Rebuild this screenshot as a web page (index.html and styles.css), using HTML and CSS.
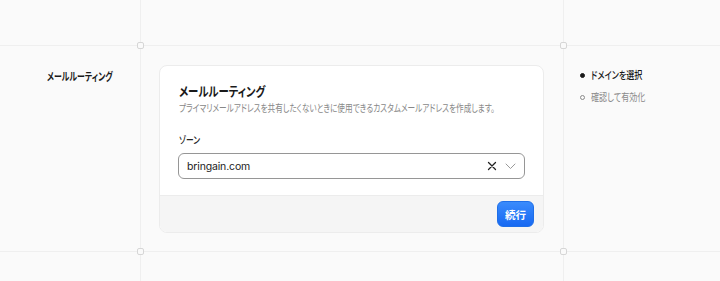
FILE: index.html
```html
<!DOCTYPE html>
<html lang="ja">
<head>
<meta charset="utf-8">
<link rel="stylesheet" href="styles.css">
</head>
<body>
<div class="page">
  <div class="grid">
    <div class="cell"></div>
    <div class="cell"></div>
    <div class="cell"></div>

    <div class="cell side-label">
      <span class="label-text narrow">メールルーティング</span>
    </div>
    <div class="cell main">
      <div class="card">
        <div class="card-body">
          <h2 class="card-title narrow">メールルーティング</h2>
          <p class="card-desc narrow">プライマリメールアドレスを共有したくないときに使用できるカスタムメールアドレスを作成します。</p>
          <div class="field">
            <div class="field-label narrow">ゾーン</div>
            <div class="select">
              <span class="select-value">bringain.com</span>
              <span class="select-icons">
                <svg class="icon-x" width="10" height="10" viewBox="0 0 10 10"><path d="M1.5 1.5 L8.5 8.5 M8.5 1.5 L1.5 8.5" stroke="#222" stroke-width="1.3" fill="none" stroke-linecap="round"/></svg>
                <svg class="icon-chev" width="11" height="7" viewBox="0 0 11 7"><path d="M1 1 L5.5 5.5 L10 1" stroke="#999" stroke-width="1" fill="none" stroke-linecap="round" stroke-linejoin="round"/></svg>
              </span>
            </div>
          </div>
        </div>
        <div class="card-footer">
          <button class="btn-primary">続行</button>
        </div>
      </div>
    </div>
    <div class="cell steps">
      <ul class="step-list">
        <li class="step active"><span class="dot"></span><span class="narrow">ドメインを選択</span></li>
        <li class="step"><span class="dot"></span><span class="narrow">確認して有効化</span></li>
      </ul>
    </div>

    <div class="cell"></div>
    <div class="cell"></div>
    <div class="cell"></div>
  </div>
  <span class="marker m1"></span>
  <span class="marker m2"></span>
  <span class="marker m3"></span>
  <span class="marker m4"></span>
</div>
</body>
</html>
```
FILE: styles.css
```css
* { box-sizing: border-box; }
html, body { margin: 0; padding: 0; }
body {
  background: #fafafa;
  font-family: "Noto Sans CJK JP", "Noto Sans", sans-serif;
  font-feature-settings: "palt";
  color: #1a1a1a;
  width: 720px;
  height: 281px;
  overflow: hidden;
}
.page { position: relative; width: 720px; height: 281px; }
.grid {
  display: grid;
  grid-template-columns: 140px 422px 1fr;
  grid-template-rows: 45px 205px 1fr;
  gap: 1px;
  background: #efefef;
  height: 281px;
}
.cell { background: #fafafa; }

/* condensed rendering of the Japanese UI font */
.narrow {
  display: inline-block;
  white-space: nowrap;
  transform: scaleX(0.77);
  transform-origin: left center;
}
h2.narrow, p.narrow, div.narrow { display: block; }

.side-label { padding: 16px 0 0 47px; }
.label-text { font-size: 11px; font-weight: 700; transform: scaleX(0.72); }

.main { padding: 19px 19px 17px 18px; }
.card {
  background: #fff;
  border: 1px solid #ececec;
  border-radius: 8px;
  height: 168px;
  display: flex;
  flex-direction: column;
  overflow: hidden;
}
.card-body { padding: 16px 18px 0 19px; flex: 1; }
.card-title { margin: 0; font-size: 13px; font-weight: 700; line-height: 18px; transform: scaleX(0.8); }
.card-desc { margin: 0; font-size: 10.2px; color: #888; line-height: 15px; transform: scaleX(0.75); }
.field { margin-top: 18px; }
.field-label { font-size: 10px; font-weight: 500; line-height: 14px; margin-bottom: 6px; color: #222; }
.select {
  height: 26px;
  border: 1px solid #969696;
  border-radius: 6px;
  display: flex;
  align-items: center;
  justify-content: space-between;
  padding: 0 8px;
  margin-left: -1px;
}
.select-value { font-family: "Inter", "Noto Sans", sans-serif; font-size: 10.5px; letter-spacing: -0.15px; color: #222; }
.select-icons { display: flex; align-items: center; gap: 8px; }

.card-footer {
  background: #f5f5f5;
  border-top: 1px solid #ececec;
  height: 37px;
  display: flex;
  align-items: center;
  justify-content: flex-end;
  padding-right: 9px;
}
.btn-primary {
  height: 26px;
  width: 37px;
  border: 1px solid #1f6fe8;
  border-radius: 6px;
  background: linear-gradient(#3a8bfc, #1769f2);
  color: #fff;
  font-family: "Noto Sans CJK JP", sans-serif;
  font-size: 10.5px;
  font-weight: 700;
  padding: 0;
}

.steps { padding: 22px 0 0 16px; }
.step-list { list-style: none; margin: 0; padding: 0; }
.step { display: flex; align-items: center; font-size: 10.5px; line-height: 14px; margin-bottom: 8px; color: #8a8a8a; }
.step.active { color: #1a1a1a; font-weight: 500; }
.dot { width: 5px; height: 5px; border-radius: 50%; border: 1px solid #8a8a8a; margin-right: 6px; flex: none; }
.step.active .dot { background: #1a1a1a; border-color: #1a1a1a; }

.marker {
  position: absolute;
  width: 7px;
  height: 7px;
  border: 1px solid #d6d6d6;
  border-radius: 2px;
  background: #fafafa;
}
.m1 { left: 137px; top: 42px; }
.m2 { left: 560px; top: 42px; }
.m3 { left: 137px; top: 248px; }
.m4 { left: 560px; top: 248px; }
```
